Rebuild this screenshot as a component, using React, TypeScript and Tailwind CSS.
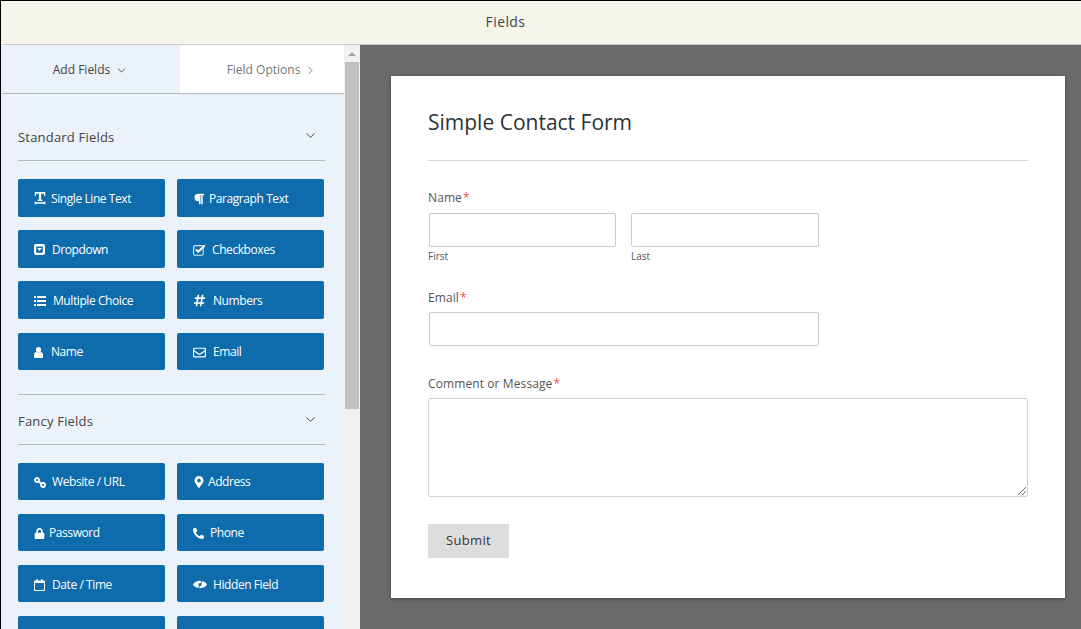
import type { ReactNode } from 'react'
import { FaParagraph, FaHashtag, FaRegEnvelope, FaMapMarkerAlt, FaLock, FaPhoneAlt } from 'react-icons/fa'
import { ChevronDown, ChevronRight } from 'lucide-react'

const BTN_BLUE = '#0e6cad'

const TextIcon = () => (
  <svg width="12" height="13" viewBox="0 0 12 13" fill="currentColor">
    <path d="M.7 0h10.600v4h-1L9.800 1.800H7.100v6h1.300v1.200H3.600V7.800h1.300v-6H2.200L1.700 4h-1z" />
    <path d="M0 11l2-1.700v1h8v-1l2 1.700-2 1.700v-1H2v1z" />
  </svg>
)

const DropdownIcon = () => (
  <svg width="11" height="11" viewBox="0 0 11 11" fill="currentColor">
    <path
      fillRule="evenodd"
      d="M2 0h7a2 2 0 0 1 2 2v7a2 2 0 0 1-2 2H2a2 2 0 0 1-2-2V2a2 2 0 0 1 2-2zM2.200 2.400v6.400h6.600V2.400zM3.200 4h4.600L5.500 7z"
    />
  </svg>
)

const CheckIcon = () => (
  <svg width="13" height="12" viewBox="0 0 13 12" fill="none" stroke="currentColor">
    <rect x="0.6" y="1.6" width="9.6" height="9.6" rx="1.5" strokeWidth="1.1" opacity="0.85" />
    <path d="M2.800 5.400 5.200 7.800 11.800 1.400" strokeWidth="2" />
  </svg>
)

const ListIcon = () => (
  <svg width="12" height="10" viewBox="0 0 12 10" fill="currentColor">
    <path d="M0 0h2v2H0zM3 0h9v2H3zM0 4h2v2H0zM3 4h9v2H3zM0 8h2v2H0zM3 8h9v2H3z" />
  </svg>
)

const UserIcon = () => (
  <svg width="9" height="11" viewBox="0 0 9 11" fill="currentColor">
    <ellipse cx="4.5" cy="2.8" rx="2.6" ry="2.8" />
    <path d="M1 11a1 1 0 0 1-1-1V8c0-1.800 1-3 2.300-3 .6.600 3.800.600 4.400 0C8 5 9 6.200 9 8v2a1 1 0 0 1-1 1z" />
  </svg>
)

const LinkIcon = () => (
  <svg width="12" height="11" viewBox="0 0 12 11" fill="none" stroke="currentColor" strokeWidth="1.8">
    <circle cx="3" cy="3" r="2" />
    <circle cx="9" cy="8" r="2" />
    <path d="M4.500 4.300 7.500 6.700" />
  </svg>
)

const CalendarIcon = () => (
  <svg width="11" height="12" viewBox="0 0 11 12" fill="currentColor">
    <path
      fillRule="evenodd"
      d="M1 1.500h1.500V0h1.300v1.500h3.400V0h1.300v1.500H10a1 1 0 0 1 1 1V11a1 1 0 0 1-1 1H1a1 1 0 0 1-1-1V2.500a1 1 0 0 1 1-1zM1 4v7h9V4z"
    />
  </svg>
)

const EyeIcon = () => (
  <svg width="14" height="11" viewBox="0 0 14 11">
    <path d="M0 5.500C3 .5 11 .5 14 5.500 11 10.500 3 10.500 0 5.500z" fill="currentColor" />
    <circle cx="7" cy="5.500" r="1.600" fill={BTN_BLUE} />
    <path d="M10 0 4.500 11" stroke={BTN_BLUE} strokeWidth="1" />
  </svg>
)

type Field = { label: string; icon?: ReactNode; col?: string; cls?: string }

// col is the width of the icon column, it sets where each label starts
const STANDARD: Field[] = [
  { label: 'Single Line Text', icon: <TextIcon />, col: 'w-[17px]' },
  { label: 'Paragraph Text', icon: <FaParagraph size={12} />, col: 'w-[16px]' },
  { label: 'Dropdown', icon: <DropdownIcon />, col: 'w-[18px]' },
  { label: 'Checkboxes', icon: <CheckIcon />, col: 'w-[19px]' },
  { label: 'Multiple Choice', icon: <ListIcon />, col: 'w-[19px]' },
  { label: 'Numbers', icon: <FaHashtag size={13} />, col: 'w-[20px]' },
  { label: 'Name', icon: <UserIcon />, col: 'w-[17px]', cls: 'h-[37px] mt-[1px]' },
  { label: 'Email', icon: <FaRegEnvelope size={13} />, col: 'w-[20px]', cls: 'h-[37px] mt-[1px]' },
]

const FANCY: Field[] = [
  { label: 'Website / URL', icon: <LinkIcon />, col: 'w-[18px]', cls: 'h-[37px]' },
  { label: 'Address', icon: <FaMapMarkerAlt size={12} />, col: 'w-[15px]', cls: 'h-[37px]' },
  { label: 'Password', icon: <FaLock size={11} />, col: 'w-[15px]', cls: 'h-[37px]' },
  { label: 'Phone', icon: <FaPhoneAlt size={11} />, col: 'w-[17px]', cls: 'h-[37px]' },
  { label: 'Date / Time', icon: <CalendarIcon />, col: 'w-[18px]', cls: 'h-[37px] pt-[2px]' },
  { label: 'Hidden Field', icon: <EyeIcon />, col: 'w-[20px]', cls: 'h-[37px] pt-[2px]' },
  { label: '', cls: 'h-[37px]' },
  { label: '', cls: 'h-[37px]' },
]

function FieldButton({ field }: { field: Field }) {
  return (
    <div className={`rounded-[2px] bg-[#0e6cad] pl-[16px] pt-[1px] flex items-center text-white text-[12px] tracking-[-0.42px] ${field.cls ?? 'h-[38px]'}`}>
      {field.icon && <div className={`shrink-0 flex items-center ${field.col}`}>{field.icon}</div>}
      <span>{field.label}</span>
    </div>
  )
}

function FieldGroup({ title, fields, gapY }: { title: string; fields: Field[]; gapY: string }) {
  return (
    <div>
      <div className="border-b border-[#b4b9c9] flex items-center justify-between pr-[7px] pb-[14px] mb-[18px]">
        <span className="text-[13px] leading-[18px] text-[#444] tracking-[0.2px]">{title}</span>
        <ChevronDown size={15} strokeWidth={1.5} className="text-[#444] -mt-[4px]" />
      </div>
      <div className={`grid grid-cols-[147px_147px] gap-x-[12px] items-start ${gapY}`}>
        {fields.map((f, i) => (
          <FieldButton key={i} field={f} />
        ))}
      </div>
    </div>
  )
}

function Req() {
  return <span className="text-[#ff4d4d] ml-[1px]">*</span>
}

export default function App() {
  return (
    <div className="h-[629px] w-[1081px] overflow-hidden flex flex-col font-['Open_Sans',sans-serif] border-l border-black">
      {/* Header */}
      <div className="h-[45px] shrink-0 bg-[#f5f5ea] border-t border-black border-b-[1px] border-b-[#cfc8d8] flex items-center justify-center pr-[71px] pb-[2px]">
        <span className="text-[14px] text-[#444] tracking-[0.4px]">Fields</span>
      </div>

      <div className="flex-1 flex min-h-0">
        {/* Sidebar */}
        <div className="w-[343px] shrink-0 bg-[#ebf2f9] overflow-hidden">
          <div className="h-[49px] grid grid-cols-[179px_164px] border-b border-[#b4b9c9]">
            <div className="flex items-center justify-center gap-[5px] text-[12px] text-[#444] pt-[2px]">
              Add Fields
              <ChevronDown size={13} strokeWidth={1.6} />
            </div>
            <div className="bg-white flex items-center justify-center gap-[4px] text-[12px] text-[#777] pl-[20px] pt-[2px]">
              Field Options
              <ChevronRight size={13} strokeWidth={1.6} />
            </div>
          </div>
          <div className="pl-[17px] pr-[19px] pt-[34px]">
            <FieldGroup title="Standard Fields" fields={STANDARD} gapY="gap-y-[13px]" />
            <div className="mt-[24px] pt-[17px] border-t border-[#b4b9c9]">
              <FieldGroup title="Fancy Fields" fields={FANCY} gapY="gap-y-[14px]" />
            </div>
          </div>
        </div>

        {/* Scrollbar */}
        <div className="w-[16px] shrink-0 bg-[#f1f1f1] flex flex-col items-center">
          <div className="h-[17px] flex items-center">
            <div className="w-0 h-0 border-x-[4px] border-x-transparent border-b-[4px] border-b-[#a3a3a3]" />
          </div>
          <div className="w-[14px] h-[347px] bg-[#c1c1c1]" />
        </div>

        {/* Canvas */}
        <div className="flex-1 bg-[#6b6b6b] pt-[31px] pl-[31px] pr-[16px]">
          <div className="h-[522px] bg-white shadow-[0_1px_4px_rgba(0,0,0,0.35)] pt-[32px] px-[37px]">
            <div className="h-[53px] border-b border-[#d6d9d9]">
              <h1 className="text-[21px] leading-[28px] text-[#2c3338] font-normal">Simple Contact Form</h1>
            </div>

            <div className="mt-[28px] text-[12px] leading-[18px] text-[#555] tracking-[0.1px]">
              Name
              <Req />
            </div>
            <div className="mt-[6px] pl-[1px] flex gap-[15px]">
              <div className="w-[187px]">
                <div className="h-[34px] border border-[#c6cccc] rounded-[2px]" />
                <div className="text-[10px] leading-[14px] text-[#555] mt-[2px] -ml-[1px]">First</div>
              </div>
              <div className="w-[188px]">
                <div className="h-[34px] border border-[#c6cccc] rounded-[2px]" />
                <div className="text-[10px] leading-[14px] text-[#555] mt-[2px]">Last</div>
              </div>
            </div>

            <div className="mt-[26px] text-[12px] leading-[18px] text-[#555] tracking-[0.1px]">
              Email
              <Req />
            </div>
            <div className="mt-[5px] ml-[1px] w-[390px] h-[34px] border border-[#c6cccc] rounded-[2px]" />

            <div className="mt-[29px] text-[12px] leading-[18px] text-[#555] tracking-[0.1px]">
              Comment or Message
              <Req />
            </div>
            <div className="mt-[5px] h-[99px] border border-[#d4d4d4] rounded-[2px] flex items-end justify-end">
              <svg width="9" height="9" viewBox="0 0 9 9" className="mb-[1px] mr-[1px]">
                <path d="M1 9 L9 1 M5 9 L9 5" stroke="#444" strokeWidth="0.8" fill="none" />
              </svg>
            </div>

            <div className="mt-[27px] w-[81px] h-[34px] bg-[#dddddd] flex items-center justify-center text-[13px] text-[#333] tracking-[0.3px]">
              Submit
            </div>
          </div>
        </div>
      </div>
    </div>
  )
}
